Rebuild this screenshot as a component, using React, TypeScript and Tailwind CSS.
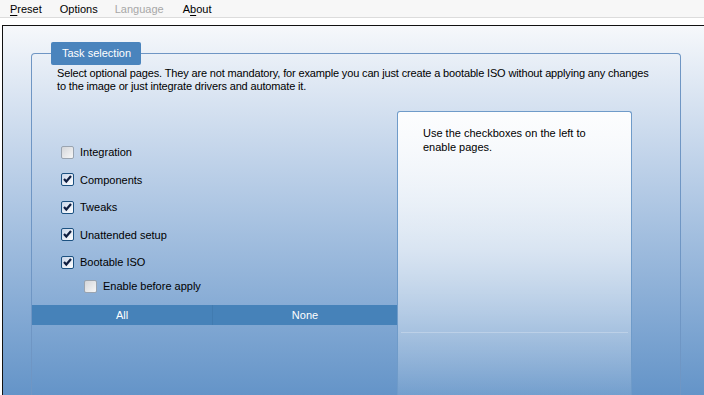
import React from "react";

function Check({ checked }: { checked: boolean }) {
  return (
    <div
      className={
        "w-[13px] h-[13px] shrink-0 border rounded-[2px] flex items-center justify-center " +
        (checked
          ? "border-[#1c5180] bg-gradient-to-br from-[#c9d6ea] to-[#ffffff]"
          : "border-[#9aa4b0] bg-gradient-to-br from-[#d4d6da] to-[#f7f7f7]")
      }
    >
      {checked && (
        <svg width="9" height="9" viewBox="0 0 9 9">
          <path d="M1 4 L3.3 6.5 L8 1" stroke="#0f1e40" strokeWidth="2.2" fill="none" />
        </svg>
      )}
    </div>
  );
}

function Row({ label, checked, indent }: { label: string; checked: boolean; indent?: boolean }) {
  return (
    <div className={"flex items-center h-[14px] gap-[6px] " + (indent ? "pl-[52px]" : "pl-[29px]")}>
      <Check checked={checked} />
      <span className="text-[11px] leading-[14px] text-black whitespace-nowrap">{label}</span>
    </div>
  );
}

export default function App() {
  return (
    <div
      className="w-[704px] h-[395px] overflow-hidden bg-white flex flex-col"
      style={{ fontFamily: "Tahoma, 'Liberation Sans', Arial, sans-serif" }}
    >
      {/* Menu bar */}
      <div className="h-[18px] shrink-0 bg-[#f7f7f7] border-b border-[#dcdcdc] flex items-center text-[11px] leading-[14px] text-black">
        <span className="ml-[10px]">
          <span className="underline underline-offset-[2px]">P</span>reset
        </span>
        <span className="ml-[18px]">Options</span>
        <span className="ml-[17px] text-[#a7a7a7]">Language</span>
        <span className="ml-[19px]">
          A<span className="underline underline-offset-[2px]">b</span>out
        </span>
      </div>
      <div className="h-[7px] shrink-0 bg-white" />
      {/* Outer panel */}
      <div className="flex-1 ml-[2px] border-l border-t border-[#111] bg-gradient-to-b from-[#f6f8fb] via-[#c2d4ea] via-35% to-[#6494c8] pl-[28px] pt-[27px] flex flex-col">
        <div className="relative w-[650px] flex-1 border border-[#6f96c4] rounded-t-[4px] border-b-0 flex flex-col">
          <div className="absolute left-[19px] top-[-12px] w-[90px] h-[23px] bg-[#4a84bd] rounded-[2px] flex items-center pl-[11px] text-white text-[11px]">
            Task selection
          </div>
          <div className="pt-[13px] pl-[25px] text-[11px] leading-[13px] tracking-[-0.15px] text-black whitespace-nowrap">
            Select optional pages. They are not mandatory, for example you can just create a bootable ISO without applying any changes
            <br />
            to the image or just integrate drivers and automate it.
          </div>
          <div className="flex flex-1 mt-[18px]">
            <div className="w-[365px] flex flex-col">
              <div className="pt-[34px] flex flex-col gap-[13.5px]">
                <Row label="Integration" checked={false} />
                <Row label="Components" checked={true} />
                <Row label="Tweaks" checked={true} />
                <Row label="Unattended setup" checked={true} />
                <Row label="Bootable ISO" checked={true} />
              </div>
              <div className="mt-[10px]">
                <Row label="Enable before apply" checked={false} indent />
              </div>
              <div className="mt-[12px] h-[20px] bg-[#4682b9] flex text-white text-[11px]">
                <div className="w-[181px] flex items-center justify-center border-r border-[#417bb0]">All</div>
                <div className="flex-1 flex items-center justify-center">None</div>
              </div>
            </div>
            <div className="w-[235px] border border-b-0 border-[#6f9bc9] rounded-t-[3px] bg-gradient-to-b from-[#fcfdfe] via-white/60 to-white/10 flex flex-col">
              <div className="pt-[14px] pl-[25px] text-[11px] leading-[14px] text-black">
                Use the checkboxes on the left to
                <br />
                enable pages.
              </div>
              <div className="mt-[178px] mx-[3px] h-px bg-white/25" />
            </div>
          </div>
        </div>
      </div>
    </div>
  );
}
